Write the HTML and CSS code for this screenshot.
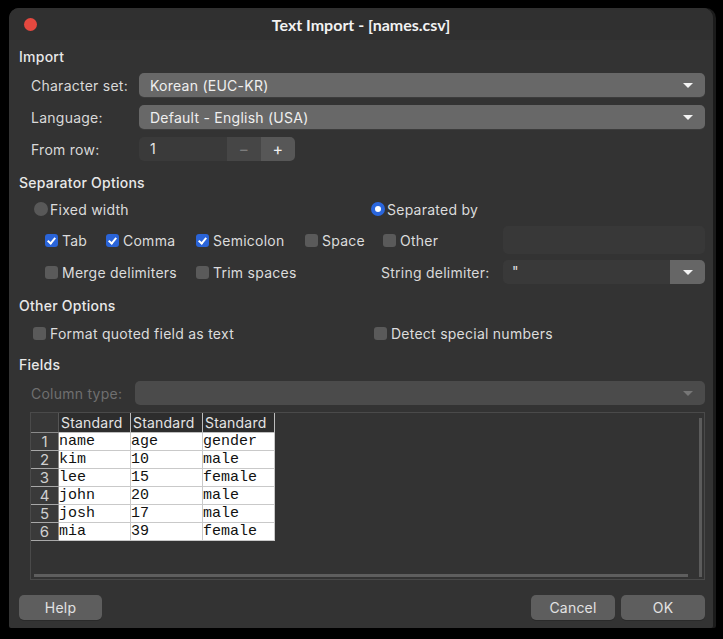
FILE: index.html
```html
<!DOCTYPE html>
<html>
<head>
<meta charset="utf-8">
<link rel="stylesheet" href="styles.css">
</head>
<body>
<div class="window">
  <div class="titlebar">
    <div class="tb-left"><span class="close"></span></div>
    <div class="title">Text Import - [names.csv]</div>
    <div></div>
  </div>
  <div class="content">
    <div class="section s-import">Import</div>
    <div class="form-row r1"><span class="lbl">Character set:</span><div class="combo"><span>Korean (EUC-KR)</span><i class="arrow"></i></div></div>
    <div class="form-row r2"><span class="lbl">Language:</span><div class="combo"><span>Default - English (USA)</span><i class="arrow"></i></div></div>
    <div class="form-row r3"><span class="lbl">From row:</span>
      <div class="spin"><span class="spin-val">1</span><span class="spin-btn minus">&minus;</span><span class="spin-btn plus">+</span></div>
    </div>

    <div class="section s-sep">Separator Options</div>
    <div class="radio-row">
      <label class="opt"><span class="radio"></span>Fixed width</label>
      <label class="opt"><span class="radio on"></span>Separated by</label>
    </div>
    <div class="sep-grid g1">
      <label class="opt"><span class="cb on"></span>Tab</label>
      <label class="opt"><span class="cb on"></span>Comma</label>
      <label class="opt"><span class="cb on"></span>Semicolon</label>
      <label class="opt"><span class="cb"></span>Space</label>
      <label class="opt"><span class="cb"></span>Other</label>
      <div class="field"></div>
    </div>
    <div class="sep-grid g2">
      <label class="opt span2"><span class="cb"></span>Merge delimiters</label>
      <label class="opt span2"><span class="cb"></span>Trim spaces</label>
      <span class="lbl strdel">String delimiter:</span>
      <div class="dcombo"><span class="dval">"</span><span class="dbtn"><i class="arrow"></i></span></div>
    </div>

    <div class="section s-other">Other Options</div>
    <div class="other-row">
      <label class="opt"><span class="cb"></span>Format quoted field as text</label>
      <label class="opt"><span class="cb"></span>Detect special numbers</label>
    </div>

    <div class="section s-fields">Fields</div>
    <div class="coltype"><span class="lbl dis">Column type:</span><div class="combo disabled"><span></span><i class="arrow"></i></div></div>

    <div class="preview">
      <table class="grid">
        <tr><th class="corner"></th><th>Standard</th><th>Standard</th><th>Standard</th></tr>
        <tr><th class="rh">1</th><td>name</td><td>age</td><td>gender</td></tr>
        <tr><th class="rh">2</th><td>kim</td><td>10</td><td>male</td></tr>
        <tr><th class="rh">3</th><td>lee</td><td>15</td><td>female</td></tr>
        <tr><th class="rh">4</th><td>john</td><td>20</td><td>male</td></tr>
        <tr><th class="rh">5</th><td>josh</td><td>17</td><td>male</td></tr>
        <tr><th class="rh">6</th><td>mia</td><td>39</td><td>female</td></tr>
      </table>
      <div class="vscroll"></div>
      <div class="hscroll"></div>
    </div>

    <div class="buttons">
      <button class="btn">Help</button>
      <div class="spacer"></div>
      <button class="btn">Cancel</button>
      <button class="btn">OK</button>
    </div>
  </div>
</div>
</body>
</html>
```

FILE: styles.css
```css
html, body {
  margin: 0;
  padding: 0;
  background: #000;
}
body {
  width: 723px;
  height: 639px;
  overflow: hidden;
  font-family: Inter, "Noto Sans", sans-serif;
  font-size: 14px;
  letter-spacing: 0.25px;
  color: #e2e2e2;
}
.window {
  margin: 8px 0 0 9px;
  width: 704px;
  height: 620px;
  background: #333333;
  border-radius: 10px 10px 2px 2px;
  box-shadow: 3px 0 0 #1b1b1b;
  overflow: hidden;
  display: flex;
  flex-direction: column;
}
.titlebar {
  height: 32px;
  flex: none;
  background: #303030;
  display: grid;
  grid-template-columns: 1fr auto 1fr;
  align-items: center;
}
.tb-left {
  display: flex;
  align-items: center;
  padding-left: 15px;
}
.close {
  width: 13px;
  height: 13px;
  border-radius: 50%;
  background: #e4483f;
}
.title {
  font-family: Lato, "Open Sans", sans-serif;
  font-weight: 700;
  font-size: 16px;
  letter-spacing: 0;
  color: #f2f2f2;
}
.content {
  padding: 0 8px 8px 10px;
  display: flex;
  flex-direction: column;
  flex: 1;
}
.section {
  height: 24px;
  line-height: 24px;
  font-weight: 500;
  color: #e8e8e8;
}
.s-import { margin-top: 5px; }
.s-sep { margin-top: 10px; }
.s-other { margin-top: 10px; }
.s-fields { margin-top: 8px; }

.form-row {
  display: flex;
  align-items: center;
  height: 24px;
  padding-left: 12px;
}
.r1 { margin-top: 4px; }
.r2, .r3 { margin-top: 8px; }
.lbl {
  width: 108px;
  flex: none;
  color: #d9d9d9;
  white-space: nowrap;
}
.lbl.dis { color: #6f6f6f; width: 104px; }
.combo {
  flex: 1;
  height: 24px;
  background: #686868;
  border-radius: 5px;
  box-shadow: 0 1px 0 #3c3c3c;
  display: flex;
  align-items: center;
  padding: 0 12px 0 11px;
  color: #efefef;
}
.combo span { flex: 1; }
.combo.disabled { background: #4b4b4b; box-shadow: none; }
.arrow {
  display: block;
  width: 0;
  height: 0;
  border-left: 5px solid transparent;
  border-right: 5px solid transparent;
  border-top: 5px solid #f4f4f4;
}
.combo.disabled .arrow { border-top-color: #777; }

.spin {
  display: flex;
  height: 24px;
  border-radius: 5px;
  overflow: hidden;
}
.spin-val {
  width: 77px;
  padding-left: 11px;
  background: #3a3a3a;
  line-height: 24px;
  color: #e6e6e6;
}
.spin-btn {
  width: 34px;
  text-align: center;
  line-height: 24px;
  font-size: 16px;
}
.minus { background: #464646; color: #7c7c7c; }
.plus { background: #575757; color: #f0f0f0; }

.opt {
  display: flex;
  align-items: center;
  gap: 4px;
  white-space: nowrap;
  color: #dcdcdc;
}
.radio {
  width: 14px;
  height: 14px;
  border-radius: 50%;
  background: #585858;
  flex: none;
  box-sizing: border-box;
  margin-right: -2px;
}
.radio.on {
  background: #fff;
  border: 4px solid #2a66dd;
}
.cb {
  width: 13px;
  height: 13px;
  border-radius: 3px;
  background: #5a5a5a;
  flex: none;
  position: relative;
}
.cb.on { background: #2a64d8; }
.cb.on::after {
  content: "";
  position: absolute;
  left: 4px;
  top: 2px;
  width: 3px;
  height: 6px;
  border: solid #fff;
  border-width: 0 2px 2px 0;
  transform: rotate(40deg);
}

.radio-row {
  margin-top: 2px;
  height: 24px;
  display: grid;
  grid-template-columns: 337px 1fr;
  align-items: center;
  padding-left: 15px;
}
.sep-grid {
  display: grid;
  grid-template-columns: 61px 90px 109px 78px 120px 1fr;
  align-items: center;
  padding-left: 26px;
}
.g1 { margin-top: 5px; height: 28px; }
.g2 { margin-top: 6px; height: 24px; }
.span2 { grid-column: span 2; }
.field {
  height: 28px;
  background: #383838;
  border-radius: 5px;
}
.strdel { margin-left: -2px; }
.dcombo {
  height: 24px;
  display: flex;
  border-radius: 5px;
  overflow: hidden;
}
.dval {
  flex: 1;
  background: #393939;
  line-height: 24px;
  padding-left: 9px;
  color: #e0e0e0;
}
.dbtn {
  width: 35px;
  background: #666;
  display: flex;
  align-items: center;
  justify-content: center;
}

.other-row {
  margin-top: 3px;
  height: 24px;
  display: grid;
  grid-template-columns: 341px 1fr;
  align-items: center;
  padding-left: 14px;
}
.coltype {
  margin-top: 4px;
  height: 24px;
  display: flex;
  align-items: center;
  padding-left: 12px;
}

.preview {
  margin-top: 7px;
  margin-left: 11px;
  height: 166px;
  border: 1px solid #4a4a4a;
  background: #333;
  position: relative;
}
.grid {
  border-collapse: collapse;
  table-layout: fixed;
}
.grid th, .grid td {
  padding: 0;
  height: 17px;
  line-height: 17px;
  overflow: hidden;
  white-space: nowrap;
  letter-spacing: 0;
}
.grid tr:first-child th {
  height: 19px;
  background: #2d2d2d;
  color: #e4e4e4;
  font-weight: 400;
  font-size: 14px;
  letter-spacing: 0.2px;
  text-align: left;
  padding-left: 2px;
  width: 69px;
  border-right: 1px solid #bdbdbd;
  border-bottom: 1px solid #bdbdbd;
}
.grid tr:first-child th.corner {
  width: 27px;
  padding: 0;
  background: #373737;
  border-right: 1px solid #555;
  border-bottom: 1px solid #8a8a8a;
}
.grid th.rh {
  background: #3a3a3a;
  color: #cfcfcf;
  font-weight: 400;
  font-size: 15px;
  text-align: center;
  border-bottom: 1px solid #a8a8a8;
  border-right: 1px solid #8a8a8a;
}
.grid td {
  background: #fff;
  color: #111;
  font-family: "Liberation Mono", monospace;
  font-size: 15px;
  border-right: 1px solid #c9c9c9;
  border-bottom: 1px solid #c9c9c9;
}
.vscroll {
  position: absolute;
  right: 2px;
  top: 5px;
  bottom: 2px;
  width: 3px;
  background: #5b5b5b;
}
.hscroll {
  position: absolute;
  left: 3px;
  right: 16px;
  bottom: 2px;
  height: 3px;
  background: #5e5e5e;
}

.buttons {
  margin-top: 15px;
  display: flex;
  gap: 6px;
  height: 25px;
}
.spacer { flex: 1; }
.btn {
  width: 84px;
  height: 25px;
  border: none;
  border-radius: 5px;
  background: #5e5e5e;
  color: #e2e2e2;
  font-family: Inter, "Noto Sans", sans-serif;
  font-size: 14px;
  letter-spacing: 0.2px;
  padding: 0;
  box-shadow: 0 1px 0 #2a2a2a;
}
.buttons .btn:first-child { width: 83px; }
```
